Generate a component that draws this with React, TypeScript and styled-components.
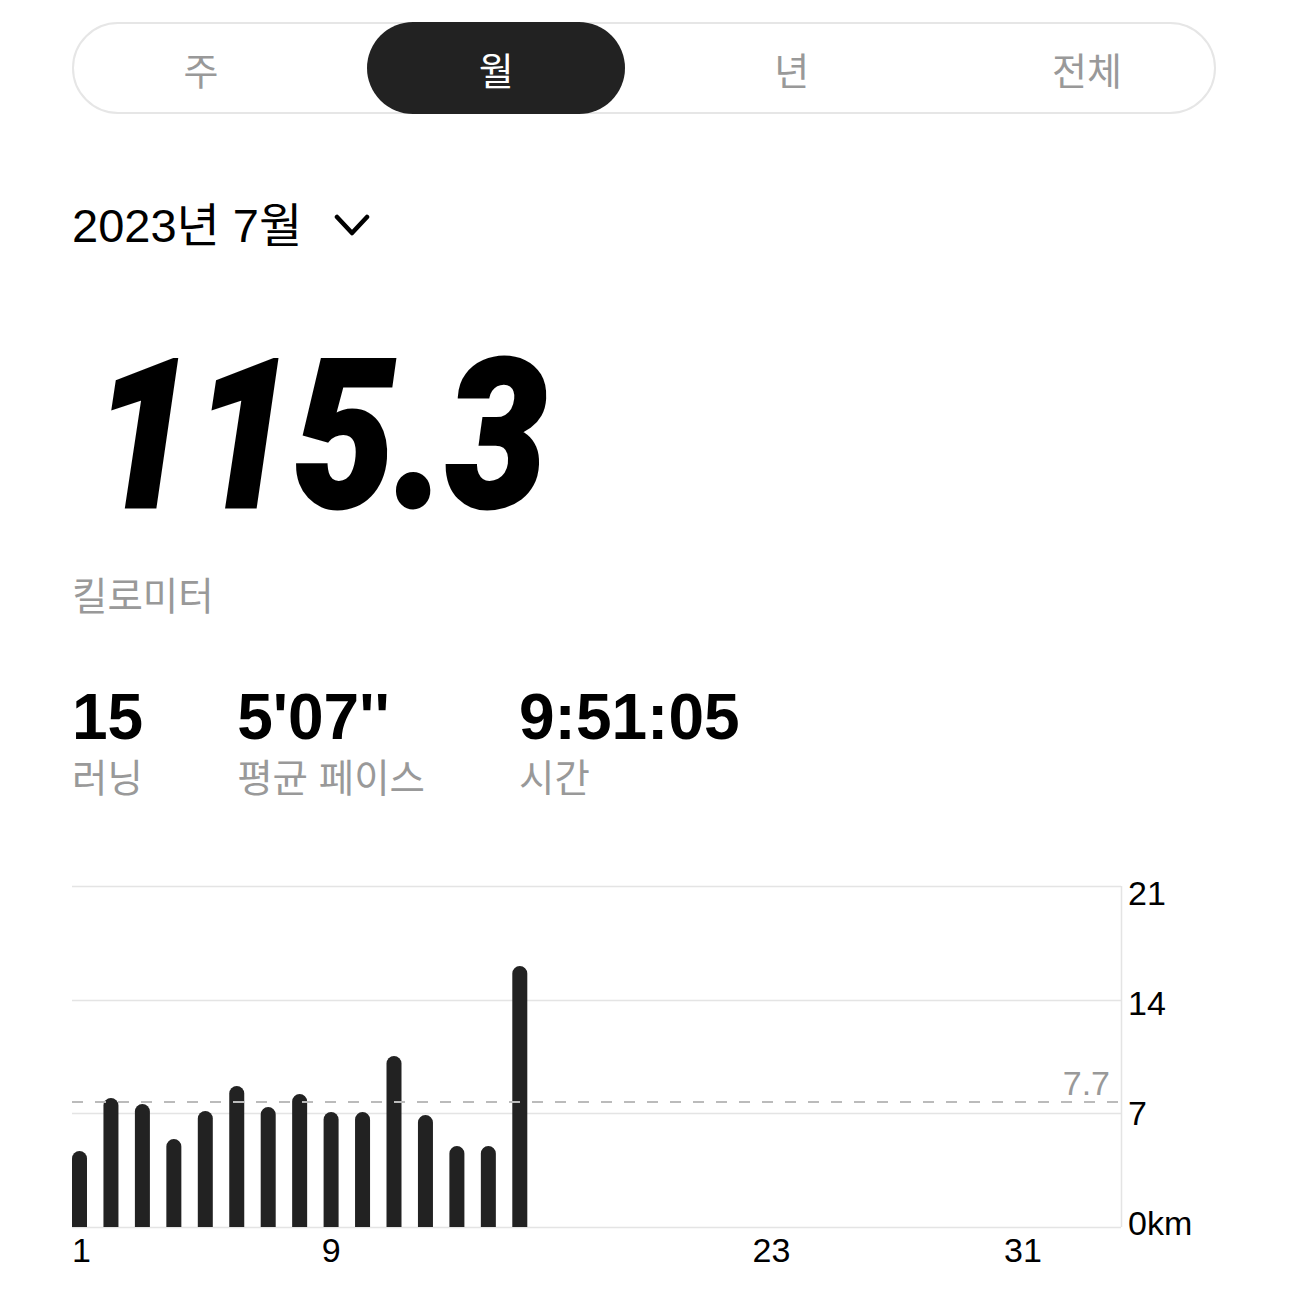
import styled, { createGlobalStyle } from "styled-components";

const GlobalStyle = createGlobalStyle`
  html, body {
    margin: 0;
    padding: 0;
    background: #ffffff;
  }
  body {
    font-family: "Liberation Sans", "Noto Sans CJK KR", sans-serif;
    color: #000;
  }
`;

const Page = styled.div`
  width: 1290px;
  height: 1290px;
  box-sizing: border-box;
  padding: 22px 74px 0 72px;
  display: flex;
  flex-direction: column;
  overflow: hidden;
`;

// 주 / 월 / 년 / 전체 탭
const Segmented = styled.div`
  height: 92px;
  box-sizing: border-box;
  border: 2px solid #e6e6e6;
  border-radius: 46px;
  display: flex;
  justify-content: space-between;
`;

const Segment = styled.div<{ $active?: boolean }>`
  width: 258px;
  margin: -2px 0;
  height: 92px;
  border-radius: 46px;
  display: flex;
  align-items: center;
  justify-content: center;
  font-size: 38px;
  color: ${(p) => (p.$active ? "#ffffff" : "#999999")};
  background: ${(p) => (p.$active ? "#222222" : "transparent")};
  &:first-child {
    margin-left: -2px;
  }
  &:last-child {
    margin-right: -2px;
  }
`;

const DateRow = styled.div`
  margin-top: 84px;
  display: flex;
  align-items: center;
  gap: 32px;
  font-size: 47px;
  line-height: 56px;
`;

const BigNumber = styled.div`
  margin-top: 98px;
  padding-left: 24px;
  font-family: Roboto, "Liberation Sans", sans-serif;
  font-weight: 900;
  font-style: italic;
  font-size: 207px;
  line-height: 170px;
  letter-spacing: -1px;
  -webkit-text-stroke: 3px #000;
  transform: scaleX(0.87);
  transform-origin: left center;
`;

const Unit = styled.div`
  margin-top: 50px;
  font-size: 38.5px;
  line-height: 50px;
  color: #999999;
`;

const Stats = styled.div`
  margin-top: 58px;
  display: flex;
  gap: 94px;
`;

const Stat = styled.div`
  display: flex;
  flex-direction: column;
`;

const StatValue = styled.div`
  font-size: 64px;
  font-weight: 700;
  line-height: 74px;
`;

const StatLabel = styled.div`
  font-size: 38.5px;
  line-height: 50px;
  color: #999999;
`;

const ChartWrap = styled.div`
  margin-top: 66px;
  width: 1144px;
  height: 400px;
`;

const days = [4.68, 7.94, 7.57, 5.42, 7.14, 8.68, 7.39, 8.19, 7.08, 7.08, 10.53, 6.9, 4.99, 4.99, 16.07];

const BASE = 357;
const PX_PER_KM = 16.24;
const PITCH = 31.45;
const BAR_W = 15;

const Chevron = () => (
  <svg width="36" height="26" viewBox="0 0 36 26">
    <path d="M3 4 L18 20 L33 4" fill="none" stroke="#000" strokeWidth="4.5" strokeLinecap="round" strokeLinejoin="round" />
  </svg>
);

const Chart = () => {
  const grid = [16, 130, 243, BASE];
  const avgY = BASE - 7.7 * PX_PER_KM;
  return (
    <svg width="1144" height="400" viewBox="0 0 1144 400">
      {grid.map((y) => (
        <line key={y} x1="0" x2="1049" y1={y + 0.5} y2={y + 0.5} stroke="#e4e4e4" strokeWidth="1.5" />
      ))}
      <line x1="1049.5" x2="1049.5" y1="16" y2={BASE} stroke="#e4e4e4" strokeWidth="1.5" />
      {days.map((v, i) => {
        const x = i * PITCH;
        const top = BASE - v * PX_PER_KM;
        const r = BAR_W / 2;
        return (
          <path
            key={i}
            d={`M${x} ${BASE} V${top + r} A${r} ${r} 0 0 1 ${x + BAR_W} ${top + r} V${BASE} Z`}
            fill="#222222"
          />
        );
      })}
      <line x1="0" x2="1049" y1={avgY} y2={avgY} stroke="#bbbbbb" strokeWidth="2" strokeDasharray="11 12" />
      <g fontFamily='"Liberation Sans", sans-serif' fontSize="34">
        <text x="1038" y="225" textAnchor="end" fill="#999999">7.7</text>
        <text x="1056" y="35" fill="#000">21</text>
        <text x="1056" y="145" fill="#000">14</text>
        <text x="1056" y="255" fill="#000">7</text>
        <text x="1056" y="365" fill="#000">0km</text>
        <text x="0" y="392" fill="#000">1</text>
        {[9, 23, 31].map((d) => (
          <text key={d} x={(d - 1) * PITCH + BAR_W / 2} y="392" textAnchor="middle" fill="#000">
            {d}
          </text>
        ))}
      </g>
    </svg>
  );
};

export default function App() {
  return (
    <>
      <GlobalStyle />
      <Page>
        <Segmented>
          <Segment>주</Segment>
          <Segment $active>월</Segment>
          <Segment>년</Segment>
          <Segment>전체</Segment>
        </Segmented>
        <DateRow>
          <span>2023년 7월</span>
          <Chevron />
        </DateRow>
        <BigNumber>115.3</BigNumber>
        <Unit>킬로미터</Unit>
        <Stats>
          <Stat>
            <StatValue>15</StatValue>
            <StatLabel>러닝</StatLabel>
          </Stat>
          <Stat>
            <StatValue>5'07''</StatValue>
            <StatLabel>평균 페이스</StatLabel>
          </Stat>
          <Stat>
            <StatValue>9:51:05</StatValue>
            <StatLabel>시간</StatLabel>
          </Stat>
        </Stats>
        <ChartWrap>
          <Chart />
        </ChartWrap>
      </Page>
    </>
  );
}
